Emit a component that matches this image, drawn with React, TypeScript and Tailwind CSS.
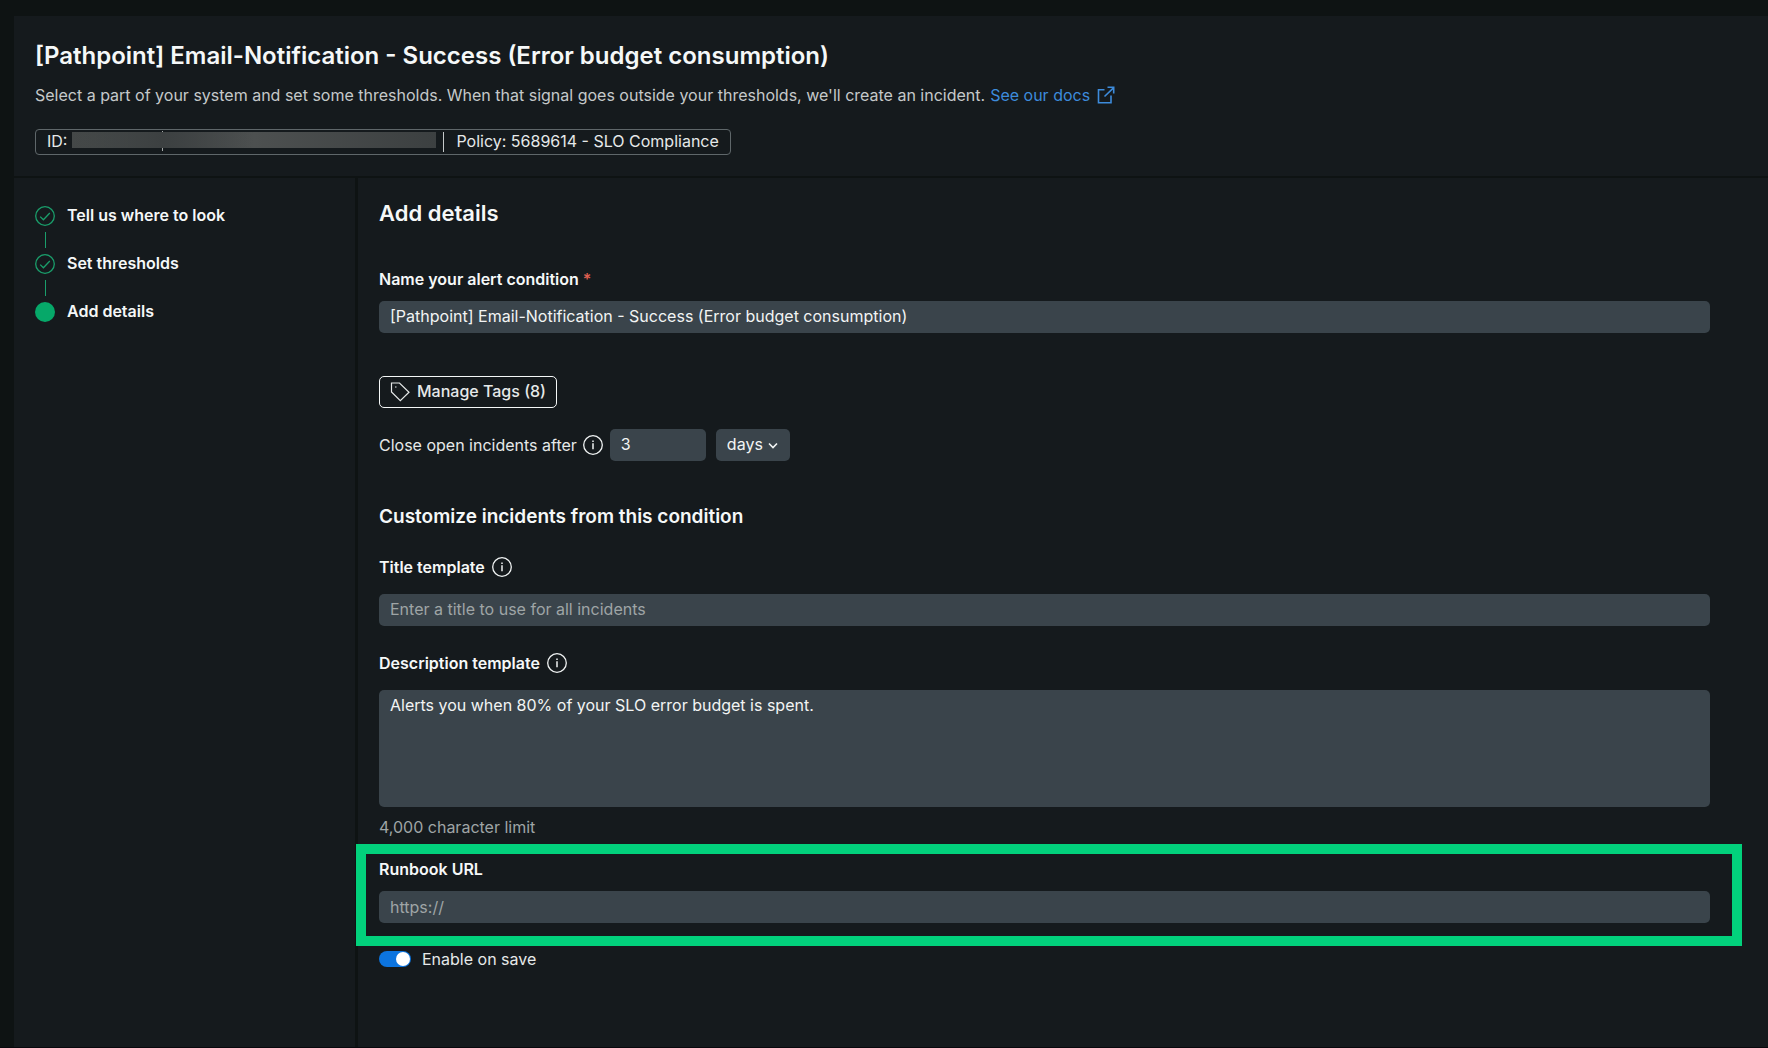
import { useState } from "react";

function InfoIcon() {
  return (
    <svg className="size-5 shrink-0" viewBox="0 0 20 20" fill="none" stroke="#f0f3f3" aria-hidden="true">
      <circle cx="10" cy="10" r="9.3" strokeWidth="1.3" />
      <path d="M10 8.2v6" strokeWidth="1.5" />
      <path d="M10 5.4v1.6" strokeWidth="1.5" />
    </svg>
  );
}

function CheckCircle() {
  return (
    <svg className="size-5 shrink-0" viewBox="0 0 20 20" fill="none" stroke="#1a9e6b" strokeWidth="1.3" aria-hidden="true">
      <circle cx="10" cy="10" r="9.3" />
      <path d="M5.2 10.6l3.2 3.2L14.8 7" />
    </svg>
  );
}

function StepLine() {
  return <div className="my-1.5 ml-2.5 h-4 w-px bg-[#1a9e6b]" />;
}

const field = "block w-full rounded-[5px] bg-[#3a444b] px-[11px] text-base text-[#f2f4f4] outline-none placeholder:text-[#9fa5a6]";
const label = "text-base leading-6 font-semibold text-[#f5f8f8]";

export default function App() {
  const [name, setName] = useState("[Pathpoint] Email-Notification - Success (Error budget consumption)");
  const [description, setDescription] = useState("Alerts you when 80% of your SLO error budget is spent.");
  const [enabled, setEnabled] = useState(true);

  return (
    <div className="flex min-h-screen flex-col border-b border-[#08080d] bg-[#0e1313] pt-4 pl-3.5 font-['Inter',sans-serif] text-base text-[#e6e9e9]">
      <header className="mb-0.5 bg-[#151a1d] px-[21px] pt-6 pb-[21px]">
        <h1 className="text-2xl leading-8 font-semibold text-[#f5f8f8]">
          [Pathpoint] Email-Notification - Success (Error budget consumption)
        </h1>
        <p className="mt-[11px] flex items-center leading-6 text-[#c5c9ca]">
          Select a part of your system and set some thresholds. When that signal goes outside your thresholds, we'll create an incident.
          <a href="#docs" className="ml-[5px] flex items-center gap-[7px] text-[#3d8bdb]">
            See our docs
            <svg className="size-[18px]" viewBox="0 0 18 18" fill="none" stroke="currentColor" strokeWidth="1.6" aria-hidden="true">
              <path d="M7.5 3.8H1.5v13h12.5V9.5M7.5 10.5L16.5 1.8M10.5 1.3h6.2v6.2" />
            </svg>
          </a>
        </p>
        <div className="mt-[22px] flex h-[26px] w-fit items-center rounded border border-[#5f676a] px-[11px]">
          <span className="pb-0.5">ID:</span>
          <span className="relative mx-[5px] mb-1 h-4 w-[364px] bg-linear-to-r from-[#444848] via-[#4d5050] to-[#3c4041]">
            <span className="absolute inset-0 bg-linear-to-r from-transparent via-[#3c4041] via-25% to-transparent to-50%" />
            <span className="absolute -top-px left-[90px] h-px w-px bg-[#a5a9a9]" />
            <span className="absolute top-4 left-[90px] h-[3px] w-px bg-[#a5a9a9]" />
          </span>
          <span className="mr-3 ml-0.5 h-5 w-px bg-[#c5c9ca]" />
          <span className="pb-0.5">Policy: 5689614 - SLO Compliance</span>
        </div>
      </header>

      <div className="flex grow gap-[3px]">
        <nav className="w-[341px] shrink-0 bg-[#151a1d] px-[21px] pt-7" aria-label="Steps">
          <a href="#look" className={`flex h-5 items-center gap-3 ${label}`}>
            <CheckCircle />
            <span className="pb-0.5">Tell us where to look</span>
          </a>
          <StepLine />
          <a href="#thresholds" className={`flex h-5 items-center gap-3 ${label}`}>
            <CheckCircle />
            <span className="pb-0.5">Set thresholds</span>
          </a>
          <StepLine />
          <a href="#details" aria-current="step" className={`flex h-5 items-center gap-3 ${label}`}>
            <span className="size-5 rounded-full bg-[#06a869]" />
            <span className="pb-0.5">Add details</span>
          </a>
        </nav>

        <main className="min-w-0 grow bg-[#151a1d] pt-[21px] pr-[26px]">
          <div className="pr-8 pl-[21px]">
            <h2 className="text-[22px] leading-7 font-[580] text-[#f5f8f8]">Add details</h2>

            <label htmlFor="name" className={`mt-10 block ${label}`}>
              Name your alert condition <span className="text-[#df5e50]">*</span>
            </label>
            <input id="name" value={name} onChange={(e) => setName(e.target.value)} className={`mt-2.5 h-8 pb-0.5 ${field}`} />

            <button type="button" className="mt-[43px] flex h-8 items-center gap-[7px] rounded-[5px] border border-[#f5f8f8] px-2.5 font-medium">
              <svg className="size-5" viewBox="0 0 20 20" fill="none" stroke="currentColor" strokeWidth="1.2" aria-hidden="true">
                <path d="M1.5 1h8l9.5 9.2-8.7 8.5L1.5 10z" />
                <path d="M5 5h1.5" />
              </svg>
              <span className="pb-0.5">Manage Tags (8)</span>
            </button>

            <div className="mt-[21px] flex items-center">
              <label htmlFor="duration">Close open incidents after</label>
              <span className="mr-[7px] ml-1.5">
                <InfoIcon />
              </span>
              <div className="w-24">
                <input id="duration" defaultValue="3" className={`h-8 pb-0.5 ${field}`} />
              </div>
              <div className="relative ml-2.5">
                <select aria-label="Time unit" className="block h-8 w-[74px] appearance-none rounded-[5px] bg-[#3a444b] pb-0.5 pl-[11px] text-[#f2f4f4]">
                  <option>days</option>
                  <option>hours</option>
                </select>
                <svg className="pointer-events-none absolute top-3 right-3 h-2 w-2.5" viewBox="0 0 10 8" fill="none" stroke="#f2f4f4" strokeWidth="1.6" aria-hidden="true">
                  <path d="M1 2.5l4 4 4-4" />
                </svg>
              </div>
            </div>

            <h3 className="mt-11 text-[19px] leading-6 font-[580] text-[#f5f8f8]">Customize incidents from this condition</h3>

            <div className="mt-[26px] flex items-center gap-[7px]">
              <label htmlFor="title" className={label}>Title template</label>
              <InfoIcon />
            </div>
            <input id="title" placeholder="Enter a title to use for all incidents" className={`mt-[15px] h-8 pb-0.5 ${field}`} />

            <div className="mt-[25px] flex items-center gap-[7px]">
              <label htmlFor="description" className={label}>Description template</label>
              <InfoIcon />
            </div>
            <textarea id="description" value={description} onChange={(e) => setDescription(e.target.value)} className={`mt-[15px] h-[117px] resize-none pt-[3px] leading-6 ${field}`} />
            <p className="mt-2 leading-6 text-[#9fa5a6]">4,000 character limit</p>
          </div>

          <div className="mt-[5px] -ml-0.5 border-10 border-[#02d17c] pt-[3px] pr-[22px] pb-[13px] pl-[13px]">
            <label htmlFor="runbook" className={`block ${label}`}>Runbook URL</label>
            <input id="runbook" placeholder="https://" className={`mt-2.5 h-8 ${field}`} />
          </div>

          <label className="mt-px ml-[21px] flex w-fit items-center gap-[11px] leading-6">
            <input type="checkbox" role="switch" checked={enabled} onChange={() => setEnabled(!enabled)} className="peer sr-only" />
            <span className="flex h-4 w-8 items-center justify-start rounded-full bg-[#5a6468] px-px peer-checked:justify-end peer-checked:bg-[#0c74df]">
              <span className="size-3.5 rounded-full bg-white" />
            </span>
            Enable on save
          </label>
        </main>
      </div>
    </div>
  );
}
